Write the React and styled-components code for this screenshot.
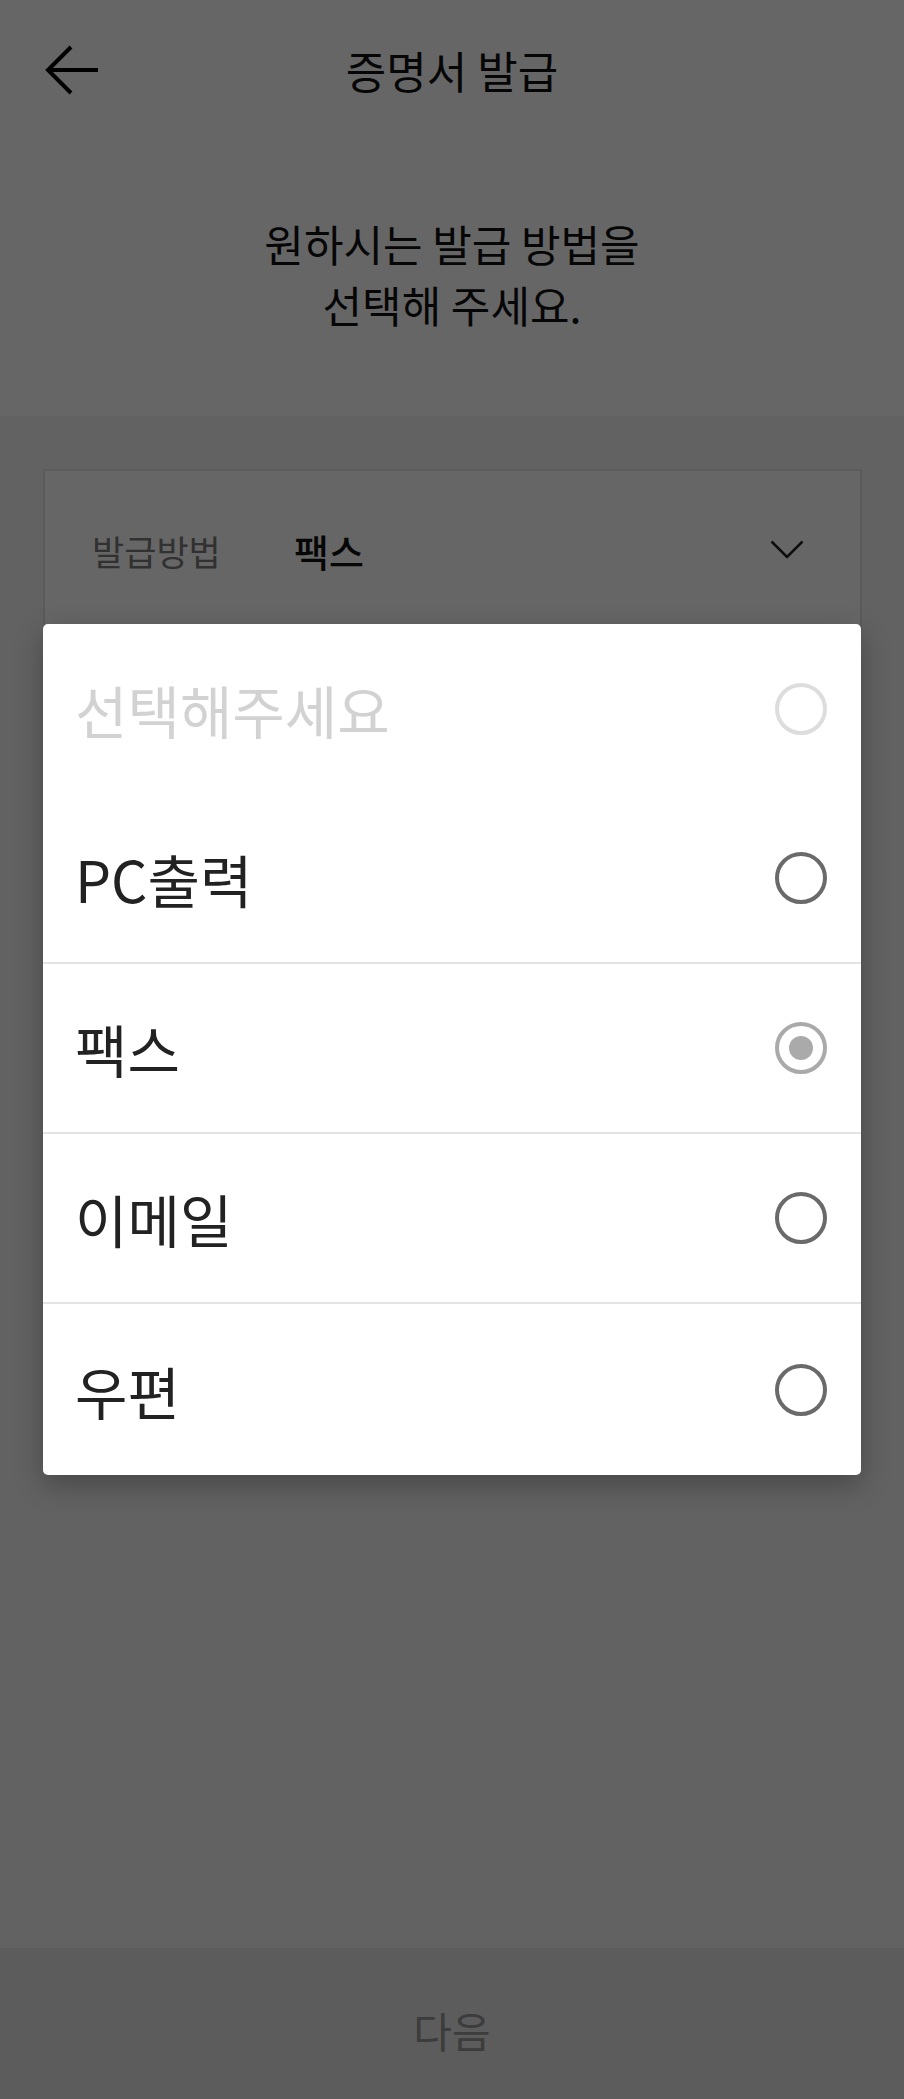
import React from "react";
import styled, { createGlobalStyle } from "styled-components";

const GlobalStyle = createGlobalStyle`
  html, body { margin: 0; padding: 0; }
  body {
    font-family: "Noto Sans CJK KR", "Noto Sans", sans-serif;
    background: #ffffff;
  }
  * { box-sizing: border-box; }
`;

const Page = styled.div`
  min-height: 2099px;
  display: flex;
  flex-direction: column;
  background: #ffffff;
  position: relative;
`;

const Header = styled.header`
  height: 140px;
  display: flex;
  align-items: center;
  justify-content: center;
  position: relative;
`;

const BackButton = styled.button`
  position: absolute;
  left: 43px;
  top: 45px;
  width: 58px;
  height: 50px;
  padding: 0;
  border: 0;
  background: transparent;
  display: flex;
  align-items: center;
  justify-content: center;
`;

const Title = styled.h1`
  margin: 0;
  font-size: 44px;
  font-weight: 400;
  color: #111;
`;

const Intro = styled.div`
  height: 276px;
  display: flex;
  align-items: center;
  justify-content: center;
  padding-bottom: 8px;
`;

const IntroText = styled.p`
  margin: 0;
  text-align: center;
  font-size: 43px;
  line-height: 61px;
  color: #111;
`;

const Section = styled.section`
  flex: 1;
  background: #f5f5f5;
  padding: 53px 42px 0 43px;
`;

const SelectBox = styled.div`
  height: 162px;
  background: #ffffff;
  border: 2px solid #e4e4e4;
  display: flex;
  align-items: center;
  padding: 0 56px 0 47px;
`;

const FieldLabel = styled.span`
  width: 202px;
  font-size: 35px;
  color: #7a7a7a;
`;

const FieldValue = styled.span`
  flex: 1;
  font-size: 38px;
  font-weight: 500;
  color: #111;
`;

const BottomButton = styled.button`
  height: 151px;
  border: 0;
  background: #e6e6e6;
  font-family: inherit;
  font-size: 42px;
  color: #979797;
  display: flex;
  align-items: center;
  justify-content: center;
  padding: 12px 0 0;
`;

const Overlay = styled.div`
  position: fixed;
  inset: 0;
  background: rgba(0, 0, 0, 0.6);
`;

const Menu = styled.ul`
  position: absolute;
  left: 43px;
  top: 624px;
  width: 818px;
  margin: 0;
  padding: 0;
  list-style: none;
  background: #ffffff;
  border-radius: 5px;
  box-shadow: 0 10px 28px rgba(0, 0, 0, 0.28);
  overflow: hidden;
`;

const Option = styled.li`
  height: ${(p) => (p.$last ? "171px" : "170px")};
  display: flex;
  align-items: center;
  justify-content: space-between;
  padding: 0 34px 0 32px;
  border-bottom: ${(p) => (p.$divider ? "2px solid #e3e3e3" : "0")};
`;

const OptionText = styled.span`
  font-size: 57px;
  color: ${(p) => (p.$placeholder ? "#d2d2d2" : "#222222")};
`;

const radioColor = { disabled: "#dddddd", off: "#6a6a6a", on: "#aaaaaa" };

const Radio = styled.span`
  width: 52px;
  height: 52px;
  border-radius: 50%;
  border: 4px solid ${(p) => radioColor[p.$state]};
  display: flex;
  align-items: center;
  justify-content: center;
  flex-shrink: 0;
  &::after {
    content: "";
    width: 24px;
    height: 24px;
    border-radius: 50%;
    background: ${(p) => (p.$state === "on" ? "#aaaaaa" : "transparent")};
  }
`;

const options = [
  { label: "선택해주세요", state: "disabled", placeholder: true },
  { label: "PC출력", state: "off", divider: true },
  { label: "팩스", state: "on", divider: true },
  { label: "이메일", state: "off", divider: true },
  { label: "우편", state: "off", last: true },
];

export default function App() {
  return (
    <>
      <GlobalStyle />
      <Page>
        <Header>
          <BackButton aria-label="뒤로">
            <svg width="56" height="50" viewBox="0 0 56 50" fill="none">
              <path d="M4 25H54" stroke="#000" strokeWidth="4" />
              <path d="M27 2L4 25L27 48" stroke="#000" strokeWidth="4" />
            </svg>
          </BackButton>
          <Title>증명서 발급</Title>
        </Header>
        <Intro>
          <IntroText>
            원하시는 발급 방법을
            <br />
            선택해 주세요.
          </IntroText>
        </Intro>
        <Section>
          <SelectBox>
            <FieldLabel>발급방법</FieldLabel>
            <FieldValue>팩스</FieldValue>
            <svg width="34" height="20" viewBox="0 0 34 20" fill="none">
              <path d="M1.5 1.5L17 17L32.5 1.5" stroke="#222" strokeWidth="2.5" />
            </svg>
          </SelectBox>
        </Section>
        <BottomButton>다음</BottomButton>
        <Overlay />
        <Menu>
          {options.map((o) => (
            <Option key={o.label} $divider={o.divider} $last={o.last}>
              <OptionText $placeholder={o.placeholder}>{o.label}</OptionText>
              <Radio $state={o.state} />
            </Option>
          ))}
        </Menu>
      </Page>
    </>
  );
}
